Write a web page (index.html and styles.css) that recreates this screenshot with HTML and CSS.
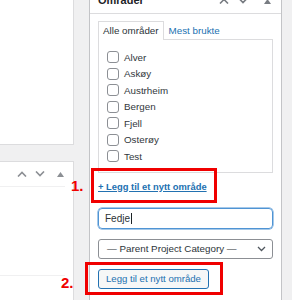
FILE: index.html
```html
<!DOCTYPE html>
<html lang="nb">
<head>
  <meta charset="UTF-8"/>
  <title>Områder</title>
  <link rel="stylesheet" href="styles.css">
</head>
<body>
  <div class="left-col">
    <div class="box box-top"></div>
    <div class="box box-bottom">
      <div class="box-head">
        <svg class="ico" width="10" height="6" viewBox="0 0 10 6"><path d="M1 5.5 L5 1.5 L9 5.5" fill="none" stroke="#8c8f94" stroke-width="1.6"/></svg>
        <svg class="ico" width="10" height="6" viewBox="0 0 10 6"><path d="M1 0.5 L5 4.5 L9 0.5" fill="none" stroke="#8c8f94" stroke-width="1.6"/></svg>
        <svg class="ico ico-tri" width="7" height="5" viewBox="0 0 7 5"><path d="M0 5 L3.5 0 L7 5 Z" fill="#8c8f94"/></svg>
      </div>
      <div class="box-line"></div>
      <div class="box-body"></div>
      <div class="box-line"></div>
    </div>
  </div>

  <div class="panel">
    <div class="panel-head">
      <h2>Områder</h2>
      <div class="head-icons">
        <svg width="10" height="6" viewBox="0 0 10 6"><path d="M1 5.5 L5 1.5 L9 5.5" fill="none" stroke="#787c82" stroke-width="1.6"/></svg>
        <svg width="10" height="6" viewBox="0 0 10 6"><path d="M1 0.5 L5 4.5 L9 0.5" fill="none" stroke="#787c82" stroke-width="1.6"/></svg>
        <svg width="7" height="5" viewBox="0 0 7 5"><path d="M0 5 L3.5 0 L7 5 Z" fill="#787c82"/></svg>
      </div>
    </div>
    <div class="panel-body">
      <ul class="tabs">
        <li class="tab active">Alle områder</li>
        <li class="tab"><a href="#">Mest brukte</a></li>
      </ul>
      <div class="tabs-panel">
        <label class="check"><span class="cb"></span>Alver</label>
        <label class="check"><span class="cb"></span>Askøy</label>
        <label class="check"><span class="cb"></span>Austrheim</label>
        <label class="check"><span class="cb"></span>Bergen</label>
        <label class="check"><span class="cb"></span>Fjell</label>
        <label class="check"><span class="cb"></span>Osterøy</label>
        <label class="check"><span class="cb"></span>Test</label>
      </div>
      <a class="add-link" href="#">+ Legg til et nytt område</a>
      <div class="field input-focus">Fedje<span class="caret"></span></div>
      <div class="field select">
        <span>— Parent Project Category —</span>
        <svg width="9" height="6" viewBox="0 0 9 6"><path d="M1 1 L4.5 4.5 L8 1" fill="none" stroke="#50575e" stroke-width="1.3"/></svg>
      </div>
      <button class="btn-add">Legg til et nytt område</button>
    </div>
  </div>

  <div class="mark mark-1"></div>
  <div class="mark-num num-1">1.</div>
  <div class="mark mark-2"></div>
  <div class="mark-num num-2">2.</div>
</body>
</html>
```

FILE: styles.css
```css
html, body {
  margin: 0; padding: 0;
}
body {
  position: relative;
  width: 292px; height: 300px;
  overflow: hidden;
  background: #f0f0f1;
  font-family: "Liberation Sans", Arial, sans-serif;
  font-size: 9.8px;
  color: #32373c;
  display: flex;
  align-items: flex-start;
}

/* left column */
.left-col {
  width: 74px;
  flex: 0 0 74px;
  display: flex; flex-direction: column;
}
.box {
  background: #fff;
  border-right: 1px solid #dcdcde;
}
.box-top {
  height: 144px;
  border-bottom: 1px solid #dcdcde;
}
.box-bottom {
  margin-top: 16px;
  height: 138px;
  border-top: 1px solid #dcdcde;
}
.box-head {
  height: 24px;
  display: flex; align-items: center;
  padding-left: 17px;
}
.box-head .ico { margin-right: 8px; }
.box-head .ico-tri { margin-left: 4px; }
.box-line {
  height: 1px;
  margin-right: 8px;
  background: #f0f0f1;
}
.box-body { height: 88px; }

/* right panel */
.panel {
  width: 191px;
  margin-left: 15px;
  margin-top: -16px;
  background: #fff;
  border: 1px solid #c3c4c7;
  border-top: none;
}
.panel-head {
  height: 29px;
  border-bottom: 1px solid #dcdcde;
  display: flex; align-items: flex-end;
  justify-content: space-between;
  padding: 0 8px 0 8px;
}
.panel-head h2 {
  margin: 0 0 7px 0;
  font-size: 11px; font-weight: 700;
  color: #1d2327;
}
.head-icons {
  display: flex; align-items: flex-end;
  gap: 9px;
  margin-bottom: 9px;
}
.head-icons svg:last-child { margin-left: 7px; margin-right: 2px; }

.panel-body {
  padding: 7px 8px 20px 8px;
}
.tabs {
  list-style: none;
  margin: 0 0 -1px 0; padding: 0;
  display: flex;
  position: relative;
}
.tab {
  padding: 0 4px;
  height: 18px; line-height: 18px;
  border: 1px solid transparent;
  border-bottom: none;
}
.tab.active {
  border-color: #dcdcde;
  background: #fff;
  color: #2c3338;
}
.tab a {
  color: #2271b1;
  text-decoration: none;
}
.tabs-panel {
  border: 1px solid #dcdcde;
  padding: 9px 8px 7px 8px;
}
.check {
  display: flex; align-items: center;
  height: 16.5px;
  color: #32373c;
}
.cb {
  width: 10px; height: 10px;
  border: 1px solid #8c8f94;
  border-radius: 3px;
  margin-right: 5px;
}
.add-link {
  display: block;
  margin-top: 7px;
  line-height: 14px;
  font-weight: 600;
  font-size: 9.4px;
  color: #2271b1;
  text-decoration: underline;
}
.field {
  box-sizing: border-box;
  height: 21px;
  border: 1px solid #8c8f94;
  border-radius: 4px;
  display: flex; align-items: center;
  padding: 0 6px;
  color: #2c3338;
  font-size: 10px;
}
.input-focus {
  margin-top: 14px;
  border-color: #4f94d4;
  box-shadow: 0 0 0 0.5px #4f94d4;
}
.caret {
  display: inline-block;
  width: 1px; height: 11px;
  background: #1d2327;
  margin-left: 1px;
}
.select {
  margin-top: 10px;
  height: 20px;
  justify-content: space-between;
  padding: 0 6px 0 8px;
  border-radius: 3px;
  font-size: 9.8px;
}
.btn-add {
  display: block;
  margin-top: 10px;
  height: 20px;
  padding: 0 7px;
  border: 1px solid #2271b1;
  border-radius: 3px;
  background: #f6f7f7;
  color: #2271b1;
  font-family: inherit;
  font-size: 9.6px;
}

/* red annotations over the screenshot */
.mark {
  position: absolute;
  border: 3px solid #f00000;
  box-sizing: border-box;
}
.mark-1 { left: 91px; top: 168px; width: 126px; height: 35px; }
.mark-2 { left: 85px; top: 262px; width: 138px; height: 33px; }
.mark-num {
  position: absolute;
  color: #f00000;
  font-size: 15px; font-weight: 700;
  line-height: 15px;
}
.num-1 { left: 71px; top: 178px; }
.num-2 { left: 61px; top: 275px; }
```
